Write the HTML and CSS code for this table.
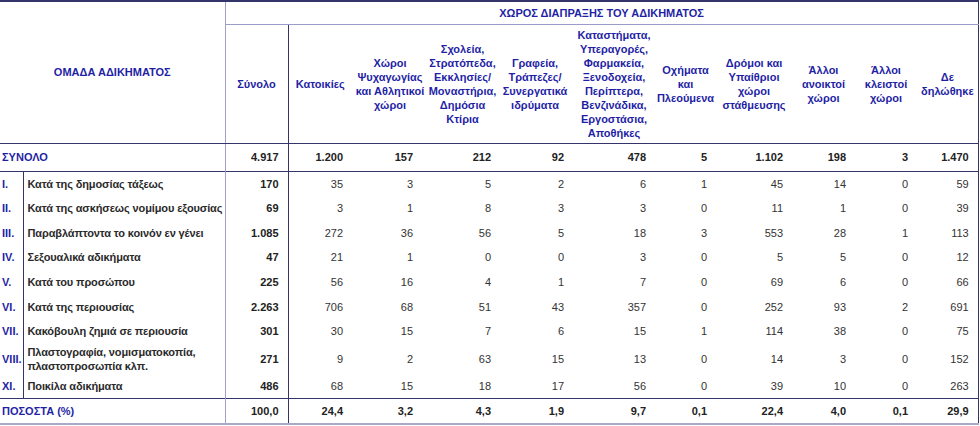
FILE: index.html
```html
<!DOCTYPE html>
<html lang="el">
<head>
<meta charset="utf-8">
<title>Χώρος διάπραξης του αδικήματος</title>
<link rel="stylesheet" href="styles.css">
</head>
<body>
<table class="stats">
  <colgroup>
    <col class="c-roman">
    <col class="c-desc">
    <col class="c-total">
    <col class="c-k1">
    <col class="c-k2">
    <col class="c-k3">
    <col class="c-k4">
    <col class="c-k5">
    <col class="c-k6">
    <col class="c-k7">
    <col class="c-k8">
    <col class="c-k9">
    <col class="c-k10">
  </colgroup>
  <thead>
    <tr class="head1">
      <th class="h-group" colspan="2" rowspan="2">ΟΜΑΔΑ ΑΔΙΚΗΜΑΤΟΣ</th>
      <th class="h-place" colspan="11">ΧΩΡΟΣ ΔΙΑΠΡΑΞΗΣ ΤΟΥ ΑΔΙΚΗΜΑΤΟΣ</th>
    </tr>
    <tr class="head2">
      <th class="h-col h-sum">Σύνολο</th>
      <th class="h-col">Κατοικίες</th>
      <th class="h-col">Χώροι<br>Ψυχαγωγίας<br>και Αθλητικοί<br>χώροι</th>
      <th class="h-col">Σχολεία,<br>Στρατόπεδα,<br>Εκκλησίες/<br>Μοναστήρια,<br>Δημόσια<br>Κτίρια</th>
      <th class="h-col">Γραφεία,<br>Τράπεζες/<br>Συνεργατικά<br>ιδρύματα</th>
      <th class="h-col">Καταστήματα,<br>Υπεραγορές,<br>Φαρμακεία,<br>Ξενοδοχεία,<br>Περίπτερα,<br>Βενζινάδικα,<br>Εργοστάσια,<br>Αποθήκες</th>
      <th class="h-col">Οχήματα<br>και<br>Πλεούμενα</th>
      <th class="h-col">Δρόμοι και<br>Υπαίθριοι<br>χώροι<br>στάθμευσης</th>
      <th class="h-col">Άλλοι<br>ανοικτοί<br>χώροι</th>
      <th class="h-col">Άλλοι<br>κλειστοί<br>χώροι</th>
      <th class="h-col">Δε<br>δηλώθηκε</th>
    </tr>
  </thead>
  <tbody>
    <tr class="sum-row">
      <td class="lbl" colspan="2">ΣΥΝΟΛΟ</td>
      <td class="num sum">4.917</td>
      <td class="num">1.200</td><td class="num wide">157</td><td class="num tight">212</td><td class="num">92</td><td class="num">478</td><td class="num">5</td><td class="num">1.102</td><td class="num">198</td><td class="num">3</td><td class="num">1.470</td>
    </tr>
    <tr class="row">
      <td class="rn">I.</td><td class="desc">Κατά της δημοσίας τάξεως</td>
      <td class="num sum">170</td>
      <td class="num">35</td><td class="num wide">3</td><td class="num tight">5</td><td class="num">2</td><td class="num">6</td><td class="num">1</td><td class="num">45</td><td class="num">14</td><td class="num">0</td><td class="num">59</td>
    </tr>
    <tr class="row">
      <td class="rn">II.</td><td class="desc">Κατά της ασκήσεως νομίμου εξουσίας</td>
      <td class="num sum">69</td>
      <td class="num">3</td><td class="num wide">1</td><td class="num tight">8</td><td class="num">3</td><td class="num">3</td><td class="num">0</td><td class="num">11</td><td class="num">1</td><td class="num">0</td><td class="num">39</td>
    </tr>
    <tr class="row">
      <td class="rn">III.</td><td class="desc">Παραβλάπτοντα το κοινόν εν γένει</td>
      <td class="num sum">1.085</td>
      <td class="num">272</td><td class="num wide">36</td><td class="num tight">56</td><td class="num">5</td><td class="num">18</td><td class="num">3</td><td class="num">553</td><td class="num">28</td><td class="num">1</td><td class="num">113</td>
    </tr>
    <tr class="row">
      <td class="rn">IV.</td><td class="desc">Σεξουαλικά αδικήματα</td>
      <td class="num sum">47</td>
      <td class="num">21</td><td class="num wide">1</td><td class="num tight">0</td><td class="num">0</td><td class="num">3</td><td class="num">0</td><td class="num">5</td><td class="num">5</td><td class="num">0</td><td class="num">12</td>
    </tr>
    <tr class="row">
      <td class="rn">V.</td><td class="desc">Κατά του προσώπου</td>
      <td class="num sum">225</td>
      <td class="num">56</td><td class="num wide">16</td><td class="num tight">4</td><td class="num">1</td><td class="num">7</td><td class="num">0</td><td class="num">69</td><td class="num">6</td><td class="num">0</td><td class="num">66</td>
    </tr>
    <tr class="row">
      <td class="rn">VI.</td><td class="desc">Κατά της περιουσίας</td>
      <td class="num sum">2.263</td>
      <td class="num">706</td><td class="num wide">68</td><td class="num tight">51</td><td class="num">43</td><td class="num">357</td><td class="num">0</td><td class="num">252</td><td class="num">93</td><td class="num">2</td><td class="num">691</td>
    </tr>
    <tr class="row">
      <td class="rn">VII.</td><td class="desc">Κακόβουλη ζημιά σε περιουσία</td>
      <td class="num sum">301</td>
      <td class="num">30</td><td class="num wide">15</td><td class="num tight">7</td><td class="num">6</td><td class="num">15</td><td class="num">1</td><td class="num">114</td><td class="num">38</td><td class="num">0</td><td class="num">75</td>
    </tr>
    <tr class="row row-tall">
      <td class="rn">VIII.</td><td class="desc">Πλαστογραφία, νομισματοκοπία,<br>πλαστοπροσωπία κλπ.</td>
      <td class="num sum">271</td>
      <td class="num">9</td><td class="num wide">2</td><td class="num tight">63</td><td class="num">15</td><td class="num">13</td><td class="num">0</td><td class="num">14</td><td class="num">3</td><td class="num">0</td><td class="num">152</td>
    </tr>
    <tr class="row">
      <td class="rn">XI.</td><td class="desc">Ποικίλα αδικήματα</td>
      <td class="num sum">486</td>
      <td class="num">68</td><td class="num wide">15</td><td class="num tight">18</td><td class="num">17</td><td class="num">56</td><td class="num">0</td><td class="num">39</td><td class="num">10</td><td class="num">0</td><td class="num">263</td>
    </tr>
    <tr class="pct-row">
      <td class="lbl" colspan="2">ΠΟΣΟΣΤΑ (%)</td>
      <td class="num sum">100,0</td>
      <td class="num">24,4</td><td class="num wide">3,2</td><td class="num tight">4,3</td><td class="num">1,9</td><td class="num">9,7</td><td class="num">0,1</td><td class="num">22,4</td><td class="num">4,0</td><td class="num">0,1</td><td class="num">29,9</td>
    </tr>
  </tbody>
</table>
</body>
</html>
```

FILE: styles.css
```css
html, body {
  margin: 0;
  padding: 0;
  background: #ffffff;
}

.stats {
  border-collapse: collapse;
  table-layout: fixed;
  width: 978px;
  border-top: 2px solid #34346a;
  border-right: 1px solid #34346a;
  border-bottom: 2px solid #a9a9c9;
  font-family: "Liberation Sans", Arial, sans-serif;
  font-size: 11px;
  color: #333333;
}

.c-roman { width: 23px; }
.c-desc  { width: 202px; }
.c-total { width: 63px; }
.c-k1    { width: 64px; }
.c-k2    { width: 76px; }
.c-k3    { width: 69px; }
.c-k4    { width: 76px; }
.c-k5    { width: 82px; }
.c-k6    { width: 61px; }
.c-k7    { width: 76px; }
.c-k8    { width: 63px; }
.c-k9    { width: 62px; }
.c-k10   { width: 61px; }

th {
  font-family: "Liberation Sans", Arial, sans-serif;
  font-weight: bold;
  font-size: 11px;
  line-height: 14px;
  color: #1f1fa6;
  text-align: center;
  vertical-align: middle;
  white-space: nowrap;
  padding: 0;
}

.head1 { height: 23px; }
.head2 { height: 119px; border-bottom: 1px solid #34346a; }

.h-group {
  border-right: 1px solid #a0a0c4;
  border-bottom: 1px solid #34346a;
}

.h-place {
  border-bottom: 1px solid #9c9cc8;
}

.h-sum {
  border-right: 1px solid #34346a;
}

td {
  padding: 0;
  line-height: 14px;
  vertical-align: middle;
  white-space: nowrap;
}

.sum-row {
  height: 28px;
  border-bottom: 1px solid #34346a;
}

.row { height: 24.7px; }
.row-tall { height: 30px; }

.pct-row {
  height: 25px;
  border-top: 1px solid #34346a;
}

.lbl,
.rn {
  font-weight: bold;
  color: #1f1fa6;
  padding-left: 2px;
}

.lbl {
  border-right: 1px solid #a0a0c4;
}

.rn {
  border-right: 1px solid #34346a;
}

.desc {
  font-weight: bold;
  color: #2a2a2a;
  letter-spacing: -0.12px;
  padding-left: 4px;
  border-right: 1px solid #a0a0c4;
}

.num {
  text-align: right;
  padding-right: 9px;
}

.num.wide { padding-right: 15px; }
.num.tight { padding-right: 6px; }

.sum {
  font-weight: bold;
  color: #222222;
  border-right: 1px solid #34346a;
}

.sum-row .num,
.pct-row .num {
  font-weight: bold;
  color: #222222;
}
```
